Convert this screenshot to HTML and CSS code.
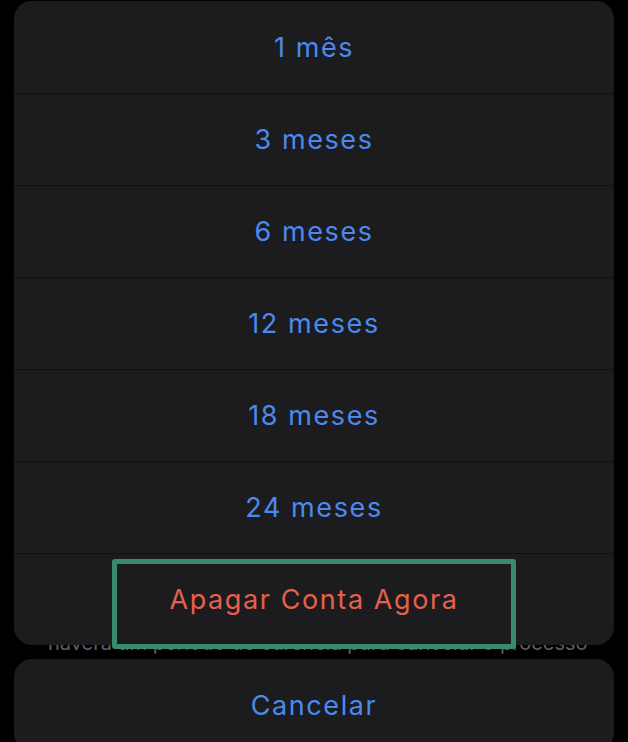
FILE: index.html
```html
<!DOCTYPE html>
<html lang="pt">
<head>
    <meta charset="UTF-8">
    <meta name="viewport" content="width=device-width, initial-scale=1.0">
    <title>Apagar conta</title>
    <link rel="stylesheet" href="styles.css">
</head>
<body>
    <div class="stack">
        <div class="sheet">
            <button class="row">1 mês</button>
            <button class="row">3 meses</button>
            <button class="row">6 meses</button>
            <button class="row">12 meses</button>
            <button class="row">18 meses</button>
            <button class="row">24 meses</button>
            <button class="row danger">
                Apagar Conta Agora
                <span class="highlight"></span>
            </button>
        </div>

        <div class="gap">
            <p class="behind">haverá um período de carência para cancelar o processo</p>
        </div>

        <div class="sheet">
            <button class="row cancel">Cancelar</button>
        </div>
    </div>
</body>
</html>
```

FILE: styles.css
```css
body {
    margin: 0;
    background: #000;
    font-family: 'Inter', 'Roboto', sans-serif;
    overflow: hidden;
}

.stack {
    padding: 1px 14px 0;
}

.sheet {
    background: #1c1c1e;
    border-radius: 18px;
    display: flex;
    flex-direction: column;
}

.row {
    position: relative;
    height: 92px;
    border: none;
    border-top: 1px solid #111112;
    background: none;
    color: #4a8af0;
    font-family: inherit;
    font-size: 27px;
    letter-spacing: 1.6px;
    padding: 0;
    box-sizing: border-box;
    cursor: pointer;
}

.row:first-child {
    border-top: none;
}

.row.danger {
    color: #e5604d;
}

.highlight {
    position: absolute;
    left: 98px;
    right: 98px;
    top: 5px;
    bottom: -4px;
    border: 5px solid #3a8a6f;
    border-radius: 3px;
}

.gap {
    height: 14px;
    overflow: hidden;
}

.behind {
    margin: -14px 0 0 34px;
    color: #5f5f63;
    font-size: 20px;
    line-height: 24px;
    white-space: nowrap;
}
```
